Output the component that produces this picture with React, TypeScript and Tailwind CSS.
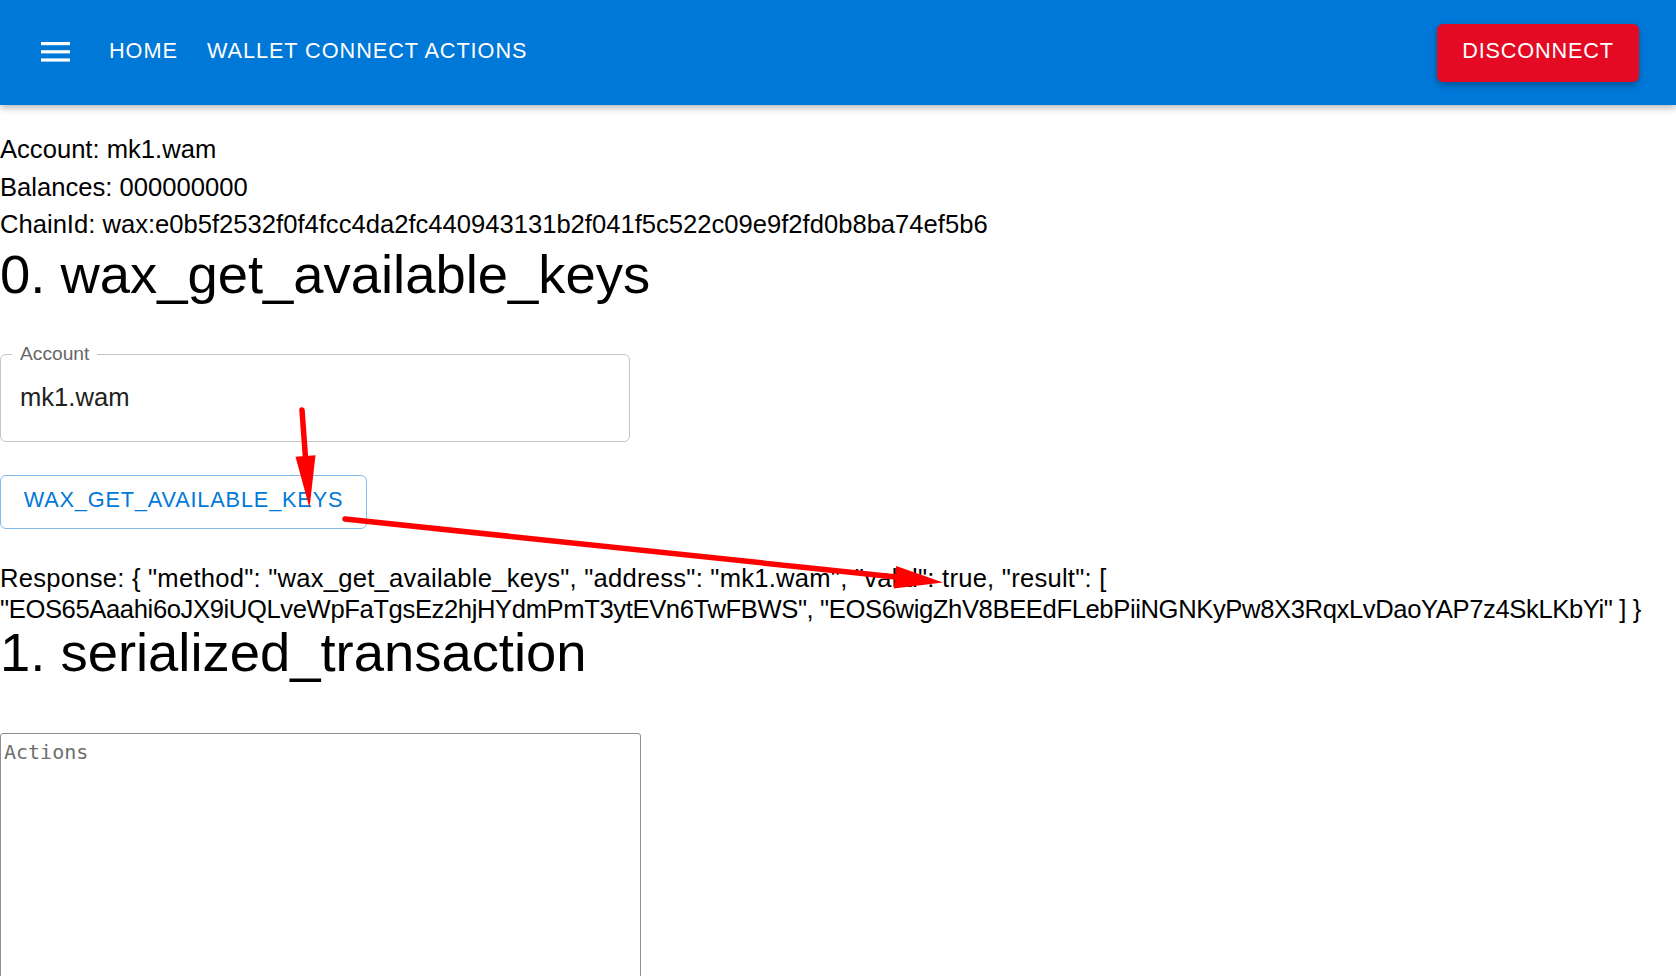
export default function App() {
  return (
    <div className="relative min-h-[976px] bg-white text-black font-['Liberation_Sans',Arial,sans-serif]">
      <header className="relative z-10 flex h-[105px] items-center bg-[#0078d7] pl-[41px] pr-[37px] shadow-[0_3px_7px_rgba(0,0,0,0.28)]">
        <svg width="29" height="20" viewBox="0 0 29 20" className="mb-[1px] shrink-0">
          <rect x="0" y="0" width="29" height="3.2" fill="white" />
          <rect x="0" y="8.2" width="29" height="3.2" fill="white" />
          <rect x="0" y="16.4" width="29" height="3.2" fill="white" />
        </svg>
        <nav className="ml-[39px] flex items-center gap-[29px] pb-[3px] text-[21.7px] uppercase tracking-[0.95px] text-white">
          <span>Home</span>
          <span>Wallet Connect Actions</span>
        </nav>
        <button className="ml-auto flex h-[58px] w-[202px] items-center justify-center rounded-[6px] bg-[#e50a23] pb-[3px] text-[21.7px] tracking-[0.8px] text-white shadow-[0_3px_6px_rgba(0,0,0,0.3)]">
          DISCONNECT
        </button>
      </header>

      <main>
        <div className="pt-[26px] text-[25.6px] leading-[37.5px]">
          <div>Account: mk1.wam</div>
          <div>Balances: 000000000</div>
          <div>ChainId: wax:e0b5f2532f0f4fcc4da2fc440943131b2f041f5c522c09e9f2fd0b8ba74ef5b6</div>
        </div>

        <h2 className="text-[54.4px] font-normal leading-[61px]">0. wax_get_available_keys</h2>

        <div className="relative mt-[49px] flex h-[88px] w-[630px] items-center rounded-[6px] border border-[#c4c4c4] pl-[19px] text-[25.6px] text-[#212121]">
          <span className="absolute -top-[12px] left-[11px] bg-white px-[8px] text-[19.2px] leading-[22px] text-[#666666]">
            Account
          </span>
          mk1.wam
        </div>

        <button className="mt-[33px] flex h-[54px] w-[367px] items-center justify-center rounded-[6px] border border-[#80bbeb] pb-[3px] text-[21.7px] tracking-[0.85px] text-[#0078d7]">
          WAX_GET_AVAILABLE_KEYS
        </button>

        <div className="mt-[34px] text-[25.6px] leading-[31px]">
          <span className="tracking-[0.24px]">
            Response: {'{'} "method": "wax_get_available_keys", "address": "mk1.wam", "valid": true, "result": [
          </span>
          <br />
          <span className="tracking-[-0.38px]">
            "EOS65Aaahi6oJX9iUQLveWpFaTgsEz2hjHYdmPmT3ytEVn6TwFBWS", "EOS6wigZhV8BEEdFLebPiiNGNKyPw8X3RqxLvDaoYAP7z4SkLKbYi" ] {'}'}
          </span>
        </div>

        <h2 className="text-[54.4px] font-normal leading-[56px]">1. serialized_transaction</h2>

        <textarea
          placeholder="Actions"
          className="mt-[52px] block h-[300px] w-[641px] resize-none rounded-[3px] border-[1.5px] border-[#8e8e99] px-[3px] py-[3px] font-['DejaVu_Sans_Mono',monospace] text-[20px] placeholder:text-[#6e6e6e]"
        />
      </main>

      <svg
        className="pointer-events-none absolute left-0 top-0 z-20"
        width="1676"
        height="976"
        viewBox="0 0 1676 976"
      >
        <line x1="302" y1="410" x2="305.5" y2="458" stroke="#ff0000" strokeWidth="5.5" strokeLinecap="round" />
        <polygon points="295.5,456.8 315.5,455.2 309.5,508" fill="#ff0000" />
        <line x1="345" y1="519" x2="896" y2="577" stroke="#ff0000" strokeWidth="5.5" strokeLinecap="round" />
        <polygon points="896.2,566 893.8,588.5 943,582.5" fill="#ff0000" />
      </svg>
    </div>
  );
}
